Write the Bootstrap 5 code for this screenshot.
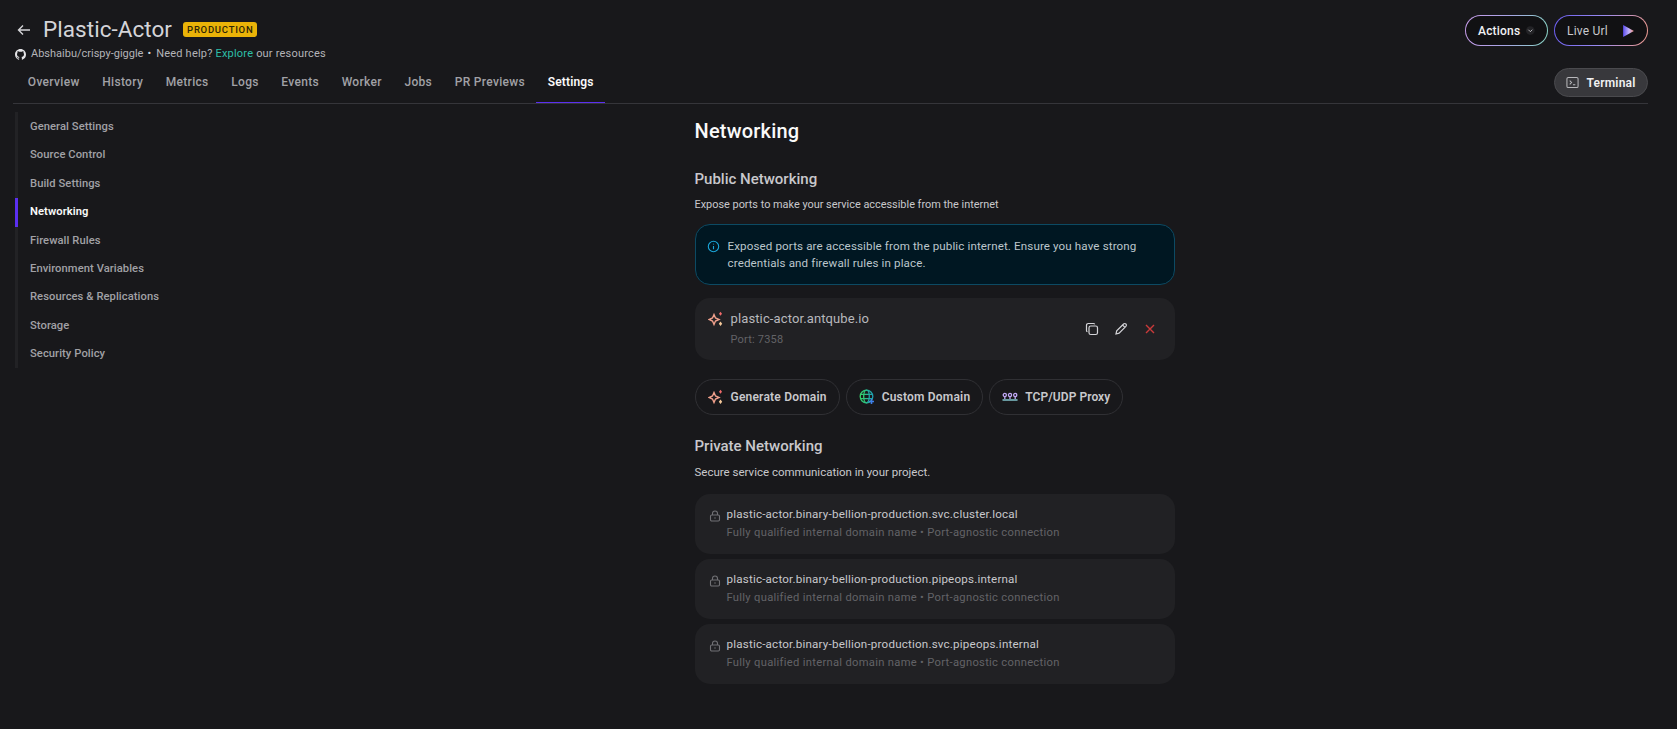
<!DOCTYPE html>
<html lang="en"><head><meta charset="utf-8"><title>Plastic-Actor</title>
<link href="https://cdn.jsdelivr.net/npm/bootstrap@5.3.0/dist/css/bootstrap.min.css" rel="stylesheet">
<style>
html,body{height:100%}
body{background:#18181b;color:#e4e4e7;font-family:Roboto,"Noto Sans",sans-serif;font-size:12px;overflow:hidden}
.shell{padding:15px 29px 0 13px}
.topbar{height:53px}
.back-ico{width:18px;height:18px;margin-left:2px;margin-right:10px;margin-top:1px}
.app-title{font-size:22.5px;line-height:28px;font-weight:400;color:#d4d4d8;margin:0;letter-spacing:.05px}
.env-tag{background:#eab308;color:#2e2506;font-size:9.5px;font-weight:500;letter-spacing:.75px;border-radius:3px;padding:0 4px;height:15px;line-height:15px;margin-left:11px}
.sub-line{font-size:11px;color:#b4b4b8;line-height:14px;margin-top:4px;margin-left:2px}
.sub-line svg{width:11px;height:11px;margin-right:5px;fill:#e4e4e7}
.sep-dot{margin:0 5px 0 4px;color:#d4d4d8}
.help-txt{letter-spacing:.2px}
.teal{color:#2dbfa8}
.btn-gap{gap:6px}
.grad-btn{height:31px;border-radius:16px;border:1.5px solid transparent;font-size:12px;font-weight:500;color:#f1f1f3;padding:0 12px;letter-spacing:.2px}
.grad-a{width:83px;background:linear-gradient(#111113,#111113) padding-box,linear-gradient(100deg,#c79be8,#a8a4e6 50%,#88d6c4) border-box}
.grad-b{width:94px;color:#c9c9cd;font-weight:400;background:linear-gradient(#111113,#111113) padding-box,linear-gradient(100deg,#6a5cf0,#9a8cf0 50%,#f09a8c) border-box}
.caret-wrap{width:11px;height:11px;margin-left:6px}
.tabs-row{height:36px;border-bottom:1px solid #35353a}
.tabs-gap{padding-left:3.5px}
.tab-item{font-size:12px;font-weight:500;color:#a1a1a6;padding:0 11.3px;height:36px;line-height:30px;text-decoration:none;display:block;letter-spacing:.32px}
.tab-item.on{color:#fafafa;font-weight:600;letter-spacing:.15px;border-bottom:1px solid #5b2ff0}
.term-btn{width:94px;height:29px;border-radius:15px;background:#38383c;border:1px solid #4a4a4e;color:#f1f1f3;font-size:12px;font-weight:600;margin-bottom:6px;letter-spacing:.2px}
.term-btn svg{width:13px;height:13px;margin-right:7px}
.side-col{width:681.5px;flex:none;padding-top:8px;padding-left:2px}
.side-list{border-left:3px solid #222225;padding:1px 0 0;margin:0;list-style:none;height:256px}
.side-list li{height:28.4px;line-height:28px;padding-left:12px;font-size:11.2px;font-weight:500;color:#a1a1a6;margin-left:-3px;border-left:3px solid transparent;letter-spacing:.07px}
.side-list li.on{color:#fafafa;font-weight:600;border-left-color:#5b2ff0}
.main-col{width:480.5px;flex:none;padding-top:13px}
.h-page{font-size:20px;line-height:28px;font-weight:500;color:#fafafa;margin:0 0 23px;letter-spacing:.2px}
.h-sec{font-size:15px;line-height:22px;font-weight:500;color:#c8c8cc;margin:0 0 7px}
.p-sec{font-size:10.9px;line-height:16px;color:#c8c8cc;margin:0 0 11px}
.p-priv{font-size:11.5px;margin-bottom:14px}
.note-box{height:61px;background:#001722;border:1px solid #0c4a63;border-radius:15px;padding:13px 11px 0;font-size:11.6px;line-height:17px;color:#bcc6cc;margin-bottom:13px;letter-spacing:.12px}
.note-box svg{width:13px;height:13px;flex:none;margin-right:8px;margin-top:2px}
.domain-card{height:62px;background:#212124;border-radius:15px;padding:13px 18px 0 13px;margin-bottom:19px}
.domain-name{font-size:13px;line-height:16px;color:#b8b8bc;letter-spacing:.12px}
.domain-port{font-size:11px;line-height:14px;color:#636367;margin-top:6px;letter-spacing:.2px}
.spark{width:16px;height:16px;flex:none;margin-right:7px}
.act-ico{width:14px;height:14px;margin-left:15px}
.act-row{margin-top:11px}
.pill-btn{height:36px;border-radius:18px;border:1px solid #303034;background:transparent;font-size:12px;font-weight:600;color:#c8c8cc;padding:0 12px;letter-spacing:.2px}
.pill-btn svg{width:16px;height:16px;margin-right:7px;flex:none}
.pill-tight{letter-spacing:.05px}
.mt-priv{margin-top:20px}
.internal-card{height:60px;background:#212124;border-radius:15px;padding:12px 14px;margin-bottom:5px}
.lock-ico{width:12px;height:12px;flex:none;margin-right:6px;margin-top:4px}
.int-name{font-size:11.6px;line-height:16px;color:#c8c8cc;letter-spacing:.2px}
.int-desc{font-size:11.2px;line-height:16px;color:#636367;margin-top:3px;letter-spacing:.3px}
</style></head>
<body>
<div class="shell">
  <div class="d-flex justify-content-between align-items-start topbar">
    <div>
      <div class="d-flex align-items-center">
        <svg class="back-ico" viewBox="0 0 18 18" fill="none" stroke="#d4d4d8" stroke-width="1.4"><path d="M15 9H3.5M8 4.5 3.5 9 8 13.5"/></svg>
        <h1 class="app-title">Plastic-Actor</h1>
        <span class="env-tag">PRODUCTION</span>
      </div>
      <div class="sub-line d-flex align-items-center">
        <svg viewBox="0 0 16 16"><path d="M8 0C3.58 0 0 3.58 0 8c0 3.54 2.29 6.53 5.47 7.59.4.07.55-.17.55-.38v-1.33c-2.23.48-2.7-1.07-2.7-1.07-.36-.92-.89-1.17-.89-1.17-.73-.5.05-.49.05-.49.8.06 1.23.83 1.23.83.71 1.22 1.87.87 2.33.66.07-.52.28-.87.5-1.07-1.78-.2-3.64-.89-3.64-3.95 0-.87.31-1.59.82-2.15-.08-.2-.36-1.02.08-2.12 0 0 .67-.21 2.2.82a7.6 7.6 0 0 1 4 0c1.53-1.04 2.2-.82 2.2-.82.44 1.1.16 1.92.08 2.12.51.56.82 1.27.82 2.15 0 3.07-1.87 3.75-3.65 3.95.29.25.54.73.54 1.48v2.2c0 .21.15.46.55.38A8 8 0 0 0 16 8c0-4.42-3.58-8-8-8z"/></svg>
        <span>Abshaibu/crispy-giggle</span><span class="sep-dot">•</span><span class="help-txt">Need help?&nbsp;<span class="teal">Explore</span> our resources</span>
      </div>
    </div>
    <div class="d-flex btn-gap">
      <button class="btn d-flex align-items-center justify-content-center grad-btn grad-a">Actions<svg class="caret-wrap" viewBox="0 0 11 11" fill="none" stroke="#c8c8cc" stroke-width="1.1"><circle cx="5.5" cy="5.5" r="5.5" fill="#232326" stroke="none"/><path d="M3 4.5 5.5 7 8 4.5"/></svg></button>
      <button class="btn d-flex align-items-center justify-content-between grad-btn grad-b">Live Url<svg width="14" height="14" viewBox="0 0 13 13"><defs><linearGradient id="lg" x1="0" x2="1"><stop offset="0" stop-color="#5a4cf0"/><stop offset=".55" stop-color="#c4b5f8"/><stop offset="1" stop-color="#f0907c"/></linearGradient></defs><path d="M2 1 12 6.5 2 12z" fill="url(#lg)"/></svg></button>
    </div>
  </div>
  <div class="d-flex justify-content-between align-items-end tabs-row">
    <div class="d-flex tabs-gap">
      <a class="tab-item" href="#">Overview</a><a class="tab-item" href="#">History</a><a class="tab-item" href="#">Metrics</a><a class="tab-item" href="#">Logs</a><a class="tab-item" href="#">Events</a><a class="tab-item" href="#">Worker</a><a class="tab-item" href="#">Jobs</a><a class="tab-item" href="#">PR Previews</a><a class="tab-item on" href="#">Settings</a>
    </div>
    <button class="btn d-flex align-items-center justify-content-center p-0 term-btn"><svg viewBox="0 0 14 14" fill="none" stroke="#b8b8bc" stroke-width="1.1"><rect x="1" y="1.5" width="12" height="11" rx="1.5"/><path d="M4 5l2 2-2 2M7.5 9.5H10"/></svg>Terminal</button>
  </div>
  <div class="d-flex">
    <div class="side-col">
      <ul class="side-list">
        <li>General Settings</li><li>Source Control</li><li>Build Settings</li><li class="on">Networking</li><li>Firewall Rules</li><li>Environment Variables</li><li>Resources &amp; Replications</li><li>Storage</li><li>Security Policy</li>
      </ul>
    </div>
    <div class="main-col">
      <h2 class="h-page">Networking</h2>
      <h3 class="h-sec">Public Networking</h3>
      <p class="p-sec">Expose ports to make your service accessible from the internet</p>
      <div class="note-box d-flex">
        <svg viewBox="0 0 14 14" fill="none" stroke="#1aa5d8" stroke-width="1.2"><circle cx="7" cy="7" r="5.6"/><path d="M7 6.4V10M7 4v.9"/></svg>
        <div>Exposed ports are accessible from the public internet. Ensure you have strong credentials and firewall rules in place.</div>
      </div>
      <div class="domain-card d-flex align-items-start">
        <svg class="spark" viewBox="0 0 16 16"><path d="M6 3.5 7.5 7 11 8.5 7.5 10 6 13.5 4.5 10 1 8.5 4.5 7z" fill="none" stroke="#f0a08c" stroke-width="1.4"/><path d="M12.5 .8 14 2.8 12.5 4.8 11 2.8z" fill="#f06a6a"/><path d="M12.5 10.6 14.2 12.8 12.5 15 10.8 12.8z" fill="#f5c89a"/></svg>
        <div class="flex-grow-1">
          <div class="domain-name">plastic-actor.antqube.io</div>
          <div class="domain-port">Port: 7358</div>
        </div>
        <div class="d-flex align-items-center act-row">
          <svg class="act-ico" viewBox="0 0 14 14" fill="none" stroke="#d4d4d8" stroke-width="1.2"><rect x="4" y="4" width="8.5" height="8.5" rx="1.8"/><path d="M2.4 9.8A1.6 1.6 0 0 1 1.5 8.4V3.2A1.7 1.7 0 0 1 3.2 1.5h5.2c.6 0 1.1.3 1.4.8"/></svg>
          <svg class="act-ico" viewBox="0 0 14 14" fill="none" stroke="#d4d4d8" stroke-width="1.2"><path d="M2 12l.7-3.2L9.6 2a1.5 1.5 0 0 1 2.3 2.3L5.1 11.2zM8.6 3l2.3 2.3"/></svg>
          <svg class="act-ico" viewBox="0 0 14 14" fill="none" stroke="#c93a3a" stroke-width="1.4"><path d="M3 3l8 8M11 3l-8 8"/></svg>
        </div>
      </div>
      <div class="d-flex btn-gap">
        <button class="btn d-flex align-items-center pill-btn"><svg viewBox="0 0 16 16"><path d="M6 3.5 7.5 7 11 8.5 7.5 10 6 13.5 4.5 10 1 8.5 4.5 7z" fill="none" stroke="#f0a08c" stroke-width="1.4"/><path d="M12.5 .8 14 2.8 12.5 4.8 11 2.8z" fill="#f06a6a"/><path d="M12.5 10.6 14.2 12.8 12.5 15 10.8 12.8z" fill="#f5c89a"/></svg>Generate Domain</button>
        <button class="btn d-flex align-items-center pill-btn"><svg viewBox="0 0 16 16" fill="none" stroke-width="1.3"><defs><linearGradient id="gl" x1="0" x2="1"><stop offset="0" stop-color="#35d06a"/><stop offset="1" stop-color="#1f9fb0"/></linearGradient></defs><g stroke="url(#gl)"><circle cx="7.5" cy="7.5" r="6.3"/><ellipse cx="7.5" cy="7.5" rx="2.8" ry="6.3"/><path d="M1.5 5.3h12M1.5 9.7h12"/></g><path d="M12.5 10v5M10 12.5h5" stroke="#3f7fe8" stroke-width="1.6"/></svg>Custom Domain</button>
        <button class="btn d-flex align-items-center pill-btn pill-tight"><svg viewBox="0 0 16 16" fill="none" stroke="#c0a8f5" stroke-width="1.3"><circle cx="2.8" cy="6" r="1.6"/><circle cx="8" cy="6" r="1.6"/><circle cx="13.2" cy="6" r="1.6"/><path d="M2.8 7.6V10M8 7.6V10M13.2 7.6V10"/><path d="M.5 11h15" stroke="#8ad0d8" stroke-width="1.4"/></svg>TCP/UDP Proxy</button>
      </div>
      <div class="mt-priv">
        <h3 class="h-sec">Private Networking</h3>
        <p class="p-sec p-priv">Secure service communication in your project.</p>
      </div>
      <div class="internal-card d-flex">
        <svg class="lock-ico" viewBox="0 0 12 12" fill="none" stroke="#707074" stroke-width="1.1"><rect x="1.5" y="5" width="9" height="6" rx="1.2"/><path d="M3.5 5V3.5a2.5 2.5 0 0 1 5 0V5"/><path d="M5.2 8h1.6"/></svg>
        <div><div class="int-name">plastic-actor.binary-bellion-production.svc.cluster.local</div><div class="int-desc">Fully qualified internal domain name • Port-agnostic connection</div></div>
      </div>
      <div class="internal-card d-flex">
        <svg class="lock-ico" viewBox="0 0 12 12" fill="none" stroke="#707074" stroke-width="1.1"><rect x="1.5" y="5" width="9" height="6" rx="1.2"/><path d="M3.5 5V3.5a2.5 2.5 0 0 1 5 0V5"/><path d="M5.2 8h1.6"/></svg>
        <div><div class="int-name">plastic-actor.binary-bellion-production.pipeops.internal</div><div class="int-desc">Fully qualified internal domain name • Port-agnostic connection</div></div>
      </div>
      <div class="internal-card d-flex">
        <svg class="lock-ico" viewBox="0 0 12 12" fill="none" stroke="#707074" stroke-width="1.1"><rect x="1.5" y="5" width="9" height="6" rx="1.2"/><path d="M3.5 5V3.5a2.5 2.5 0 0 1 5 0V5"/><path d="M5.2 8h1.6"/></svg>
        <div><div class="int-name">plastic-actor.binary-bellion-production.svc.pipeops.internal</div><div class="int-desc">Fully qualified internal domain name • Port-agnostic connection</div></div>
      </div>
    </div>
  </div>
</div>
<script src="https://cdn.jsdelivr.net/npm/bootstrap@5.3.0/dist/js/bootstrap.bundle.min.js"></script>
</body></html>
